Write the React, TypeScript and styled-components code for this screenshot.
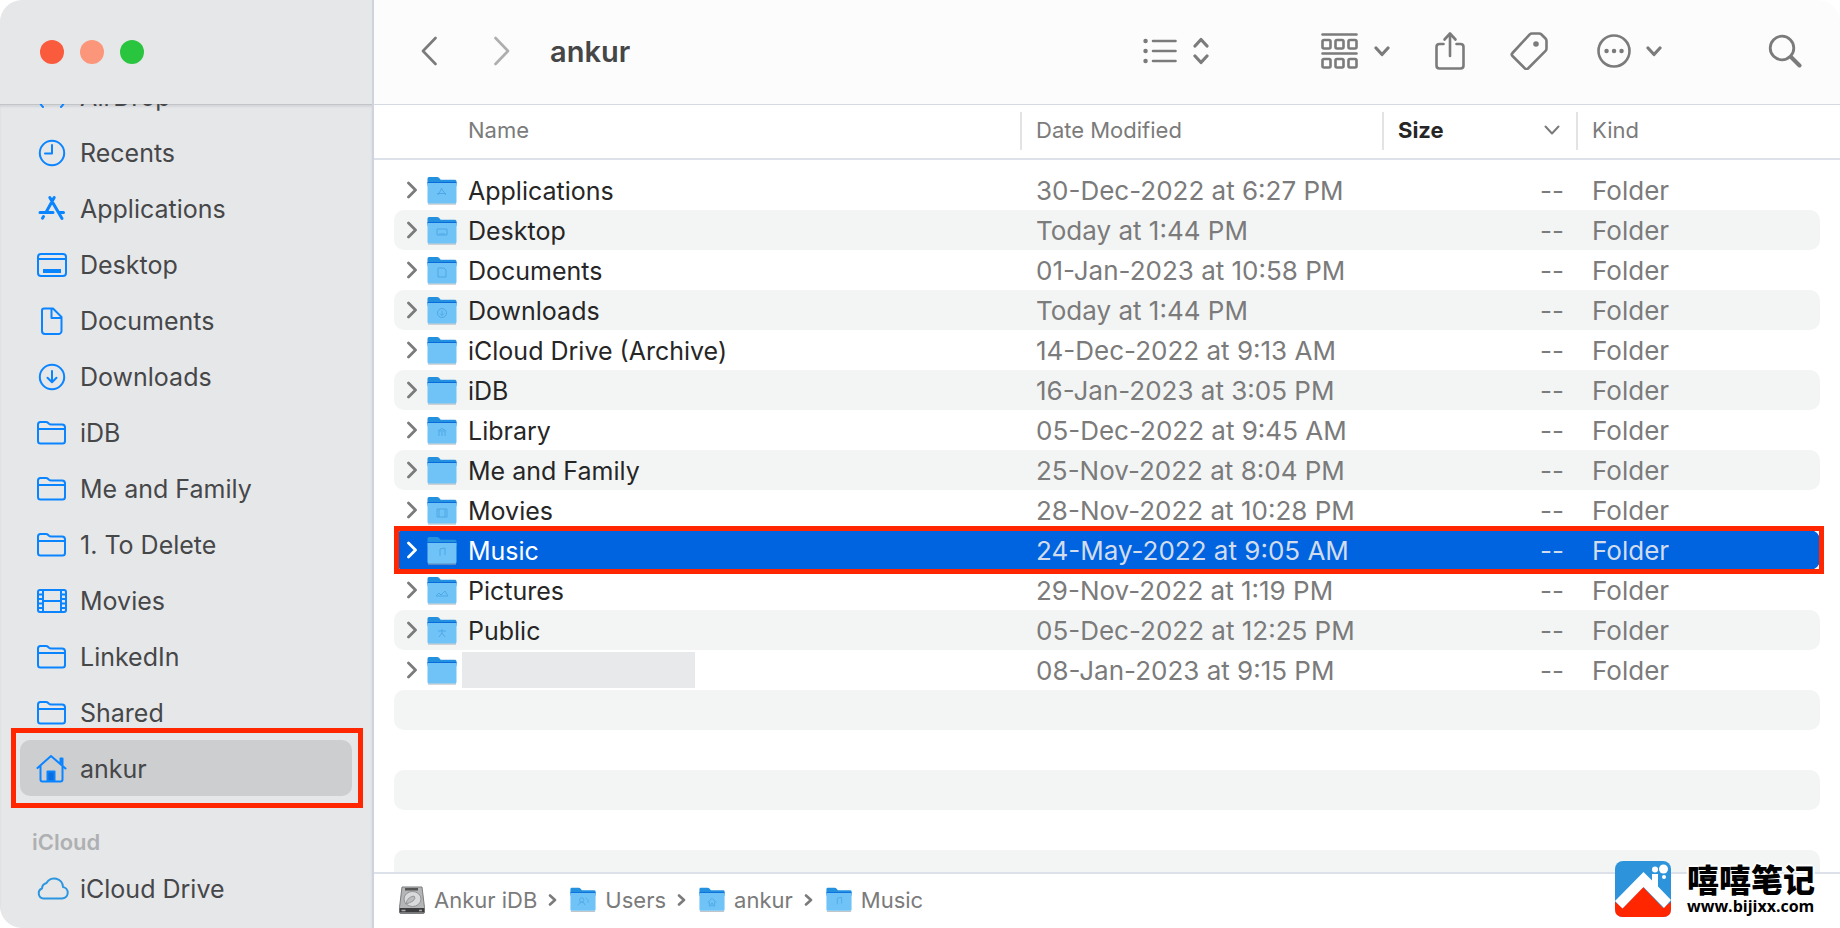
import React from "react";
import styled, { createGlobalStyle, css } from "styled-components";

const GlobalStyle = createGlobalStyle`
  * { box-sizing: border-box; }
  html, body { margin: 0; background: #fff; }
  body { font-family: Inter, "Liberation Sans", sans-serif; color: #262626; }
  button { font: inherit; color: inherit; background: none; border: 0; padding: 0; cursor: pointer; display: flex; align-items: center; }
  ul, ol { list-style: none; margin: 0; padding: 0; }
  a { color: inherit; text-decoration: none; }
  svg { display: block; flex: none; }
`;

const Window = styled.div`
  position: relative;
  display: flex;
  height: 100vh;
  min-height: 480px;
  overflow: hidden;
  border-radius: 22px;
  background: #fff;
`;

const Sidebar = styled.aside`
  display: flex;
  flex-direction: column;
  flex: none;
  width: 374px;
  background: #e6e7e9;
  border-right: 2px solid #ced3dc;
`;

const TitleBar = styled.div`
  flex: none;
  display: flex;
  align-items: center;
  gap: 16px;
  height: 104px;
  padding-left: 40px;
`;

const Light = styled.button<{ $color: string }>`
  width: 24px;
  height: 24px;
  border-radius: 50%;
  background: ${(p) => p.$color};
`;

const SideScroll = styled.nav`
  flex: 1;
  min-height: 0;
  overflow: hidden;
  display: flex;
  flex-direction: column;
  box-shadow: inset 0 1px 0 #c3c4c6, inset 0 3px 2px #d3d6db;
`;

const Places = styled.ul<{ $scrolled?: boolean }>`
  margin: ${(p) => (p.$scrolled ? "-36px" : "0")} 20px 0;
`;

const Place = styled.li`
  position: relative;
`;

const PlaceLink = styled.a<{ $active?: boolean }>`
  display: flex;
  align-items: center;
  gap: 11px;
  height: 56px;
  padding: 2px 0 0 15px;
  border-radius: 10px;
  font-size: 25px;
  color: #464749;
  background: ${(p) => (p.$active ? "#cdced0" : "transparent")};
  svg { width: 34px; }
`;

const marker = css`
  content: "";
  position: absolute;
  border: 5px solid #ff2600;
  pointer-events: none;
`;

const MarkedPlace = styled(Place)`
  &::after { ${marker} inset: -12px -11px -12px -9px; }
`;

const SectionTitle = styled.h2`
  margin: 32px 32px 4px;
  font-size: 22px;
  line-height: 28px;
  font-weight: 600;
  color: #afb0b2;
`;

const Main = styled.main`
  flex: 1;
  min-width: 0;
  display: flex;
  flex-direction: column;
`;

const Toolbar = styled.header`
  flex: none;
  display: flex;
  align-items: center;
  height: 105px;
  padding: 0 38px 2px 47px;
  background: #fcfcfc;
  border-bottom: 1px solid #d4d9e2;
  color: #7b7b7b;
`;

const Title = styled.h1`
  flex: 1;
  margin: 0 0 0 40px;
  font-size: 29px;
  font-weight: 600;
  color: #454648;
`;

const NavButton = styled.button<{ $dim?: boolean }>`
  opacity: ${(p) => (p.$dim ? 0.6 : 1)};
  & + & { margin-left: 57px; }
`;

const Tool = styled.button<{ $before?: number; $tight?: boolean }>`
  gap: ${(p) => (p.$tight ? 14 : 16)}px;
  margin-left: ${(p) => p.$before ?? 44}px;
`;

const Listing = styled.table`
  flex: 1;
  min-height: 0;
  display: flex;
  flex-direction: column;
  overflow: hidden;
`;

const columns = css`
  display: grid;
  grid-template-columns: minmax(0, 1fr) 362px 194px 244px;
`;

const Head = styled.thead`
  flex: none;
  display: block;
  padding: 7px 20px 8px;
  border-bottom: 2px solid #dde1e9;
`;

const HeadRow = styled.tr`
  ${columns}
`;

const HeadCell = styled.th<{ $sorted?: boolean; $first?: boolean }>`
  display: flex;
  align-items: center;
  justify-content: space-between;
  height: 38px;
  padding: 0 16px 2px ${(p) => (p.$first ? "74px" : "14px")};
  border-left: ${(p) => (p.$first ? "0" : "2px solid #e3e3e5")};
  font-size: 22px;
  font-weight: ${(p) => (p.$sorted ? 700 : 400)};
  color: ${(p) => (p.$sorted ? "#262626" : "#7b7b7b")};
`;

const Body = styled.tbody`
  flex: 1;
  min-height: 0;
  display: block;
  overflow: hidden;
  padding: 10px 20px 0;
`;

const Row = styled.tr<{ $selected?: boolean }>`
  ${columns}
  position: relative;
  height: 40px;
  border-radius: 10px;
  color: #7b7b7b;
  &:nth-child(even) { background: #f3f5f5; }
  ${(p) =>
    p.$selected &&
    css`
      &&:nth-child(even) { background: #0064e1; }
      color: #d2dcec;
      z-index: 1;
      &::after { ${marker} inset: -4px -4px -4px 0; }
    `}
`;

const Cell = styled.td<{ $end?: boolean }>`
  padding: 2px ${(p) => (p.$end ? "12px" : "0")} 0 16px;
  font-size: 26px;
  line-height: 38px;
  white-space: nowrap;
  text-align: ${(p) => (p.$end ? "right" : "left")};
`;

const NameCell = styled(Cell)<{ $selected?: boolean }>`
  display: flex;
  align-items: center;
  padding-left: 13px;
  font-size: 25px;
  color: ${(p) => (p.$selected ? "#fff" : "#262626")};
`;

const Disclosure = styled.button<{ $selected?: boolean }>`
  margin: 0 10px 2px 0;
  color: ${(p) => (p.$selected ? "#fff" : "#7b7b7b")};
`;

const FileName = styled.span`
  margin-left: 11px;
`;

const Redacted = styled.span`
  width: 233px;
  height: 36px;
  margin: 0 0 2px 5px;
  background: #e8e9ea;
`;

const PathBar = styled.footer`
  flex: none;
  height: 56px;
  padding: 0 25px;
  border-top: 2px solid #dde1e9;
  color: #7b7b7b;
`;

const Crumbs = styled.ol`
  display: flex;
  align-items: center;
  height: 52px;
  gap: 11px;
`;

const Crumb = styled.li`
  display: flex;
  align-items: center;
  gap: 13px;
  font-size: 22px;
  line-height: 28px;
  a { display: flex; align-items: center; gap: 9px; }
`;

const Brand = styled.a`
  position: absolute;
  right: 25px;
  bottom: 11px;
  display: flex;
  align-items: center;
  gap: 16px;
  color: #000;
  text-shadow: 0 0 2px #fff, 2px 0 1px #fff, -2px 0 1px #fff, 0 2px 1px #fff, 0 -2px 1px #fff;
`;

const BrandText = styled.span`
  display: flex;
  flex-direction: column;
`;

const BrandName = styled.span`
  font: 900 32px/34px "Noto Sans CJK SC", sans-serif;
`;

const BrandUrl = styled.span`
  font: 700 16px/22px "Open Sans", sans-serif;
`;

/* Icons */

const sideStroke = { fill: "none", stroke: "#0a84ff", strokeWidth: 2, strokeLinecap: "round", strokeLinejoin: "round" } as const;
const toolStroke = { fill: "none", stroke: "currentColor", strokeWidth: 2.6, strokeLinecap: "round", strokeLinejoin: "round" } as const;

const sideGlyphs = {
  airdrop: <path d="M8 27A13 13 0 1 1 26 27M11 23A8 8 0 1 1 23 23M17 18v1" />,
  clock: <><circle cx="17" cy="17" r="12.2" /><path d="M17 9v8.5H10" /></>,
  apps: <g strokeWidth="3"><path d="M19.200 5.500L11.500 19.500M14.800 5.500L27 26.500M5 20.500h13M24.500 20.500h4M8.500 24.500L7.500 26.200" /></g>,
  desktop: <><rect x="3" y="6" width="28" height="22" rx="3" /><path d="M3 11h28" /><path d="M8 23h18" strokeWidth="4" strokeLinecap="butt" /></>,
  doc: <path d="M9 4.500h9l8.500 8.500v14a3 3 0 0 1-3 3H10a3 3 0 0 1-3-3V6.500a2 2 0 0 1 2-2zM16.500 5v9h9.500" />,
  down: <><circle cx="17" cy="17" r="12.200" /><path d="M17 11v11M12.500 17.800l4.500 4.500 4.500-4.500" /></>,
  folder: <path d="M3 25V8.500Q3 6 5.500 6h5.500q1.200 0 2.200 1l.8.800q.8.700 2 .700H27q3 0 3 3V25q0 2.500-2.500 2.500h-22Q3 27.500 3 25zM3 13h27" />,
  film: <><rect x="3" y="6" width="28" height="22" rx="2" /><path d="M8 6v22M26 6v22M8 17h18M3 10.500h5M3 15h5M3 19.500h5M3 24h5M26 10.500h5M26 15h5M26 19.500h5M26 24h5" /></>,
  home: <><path d="M2.500 16L16 4l14.500 12.500M25.500 11V6.500h2V13M5.500 14v13.500q0 2 2 2h18q2 0 2-2V14.500" /><path d="M12.500 19.500h7v9.500h-7z" fill="#0a6ee0" /></>,
  cloud: <path d="M8.500 26.500h18.500a5.800 5.800 0 0 0 1-11.500A8.800 8.800 0 0 0 11.500 11a6 6 0 0 0-4.500 5.500 5.200 5.200 0 0 0 1.500 10z" stroke="#2d96e0" />,
};

const SideIcon = ({ name }: { name: keyof typeof sideGlyphs }) => (
  <svg viewBox="0 0 34 34" height="34" {...sideStroke} aria-hidden="true">{sideGlyphs[name]}</svg>
);

const emblems: Record<string, React.ReactNode> = {
  Applications: <path d="M15 10l-4 7M14 10l5 7M10 15.500h9" />,
  Desktop: <path d="M10 11h10v6H10zM12 16h6" />,
  Documents: <path d="M11 10h6l2 2v7h-8z" />,
  Downloads: <><circle cx="15" cy="15" r="4.500" /><path d="M15 12.500v5M13 15.500l2 2 2-2" /></>,
  Library: <path d="M11 13l4-2.500 4 2.500zM12 14v4M15 14v4M18 14v4" />,
  Movies: <path d="M10 11h10v8H10zM12 11v8M18 11v8" />,
  Music: <path d="M13 18v-7l5-1v7" />,
  Pictures: <path d="M9 18l3-3 2 2 4-4 3 5z" />,
  Public: <path d="M15 11v4l-3 4M15 15l3 4M11 13h8" />,
  Users: <><circle cx="13.500" cy="13" r="2.500" /><path d="M9.500 19q1-3.500 4-3.500t4 3.500M18 11q3 0 3 5" /></>,
  ankur: <path d="M10 16l5-5 5 5M12 15v5h2v-3h2v3h2v-5" />,
};

const FolderIcon = ({ emblem, size = 30 }: { emblem?: string; size?: number }) => (
  <svg width={size} height={size} viewBox="0 0 30 30" aria-hidden="true">
    <path d="M1 27.500h28v1H1z" fill="#a9adb2" />
    <path d="M.5 2.500q0-1.500 1.500-1.500h8q1.200 0 2 .8l1.200 1.400q.5.600 1.500.600H28q1.500 0 1.500 1.500V10H.5z" fill="#2490e0" />
    <path d="M.5 6h29v1.500H.5z" fill="#0a6bdc" />
    <path d="M.5 7h29v19q0 1.500-1.500 1.500H2Q.5 27.500.5 26z" fill="#70c3f6" />
    {emblem && emblems[emblem] && <g transform="translate(0 2)" fill="none" stroke="#4fa9e6" strokeWidth="1">{emblems[emblem]}</g>}
  </svg>
);

const DriveIcon = () => (
  <svg width="26" height="30" viewBox="0 0 26 30" aria-hidden="true">
    <path d="M3 2h20l2.500 20.500V27q0 1.500-1.500 1.500H2Q.5 28.500.5 27v-4.500z" fill="#b4b5b7" stroke="#7b7c7e" strokeWidth="1" />
    <path d="M6 3h13v2.500H6z" fill="#555" />
    <ellipse cx="13.500" cy="14" rx="8.500" ry="7.500" fill="#d9dadc" stroke="#929395" />
    <path d="M7 19q1-7 8-8 2.500 2-1 5-3 2-7 3z" fill="#bbbcbe" stroke="#8a8b8d" strokeWidth=".8" />
    <path d="M.8 23h24.400v4.500H.8z" fill="#3c3c3e" />
    <path d="M2.500 25.500h4M20 25.500h3" stroke="#aaa" strokeWidth="1.500" />
  </svg>
);

const Down = () => (
  <svg width="16" height="12" viewBox="0 0 16 12" {...toolStroke} strokeWidth="3.200" aria-hidden="true"><path d="M2 3l6 6.500L14 3" /></svg>
);

const BrandMark = () => (
  <svg width="56" height="56" viewBox="0 0 56 56" aria-hidden="true">
    <rect width="56" height="56" rx="8" fill="#2d94dc" />
    <path d="M0 41l8 6 20-21 20 21 8-6v7q0 8-8 8H8q-8 0-8-8z" fill="#ff2600" />
    <path d="M0 40L28.500 11l8.500 8.500V13h6v12.500L56 39l-7 8-20.500-21L7.500 47.500z" fill="#fff" />
    <circle cx="40" cy="8.500" r="3" fill="#fff" />
    <circle cx="48.500" cy="8" r="4.500" fill="#fff" />
    <circle cx="49" cy="16" r="2" fill="#fff" />
  </svg>
);

/* Data */

const places: { label: string; icon: keyof typeof sideGlyphs }[] = [
  { label: "AirDrop", icon: "airdrop" },
  { label: "Recents", icon: "clock" },
  { label: "Applications", icon: "apps" },
  { label: "Desktop", icon: "desktop" },
  { label: "Documents", icon: "doc" },
  { label: "Downloads", icon: "down" },
  { label: "iDB", icon: "folder" },
  { label: "Me and Family", icon: "folder" },
  { label: "1. To Delete", icon: "folder" },
  { label: "Movies", icon: "film" },
  { label: "LinkedIn", icon: "folder" },
  { label: "Shared", icon: "folder" },
];

const files: [string, string][] = [
  ["Applications", "30-Dec-2022 at 6:27 PM"],
  ["Desktop", "Today at 1:44 PM"],
  ["Documents", "01-Jan-2023 at 10:58 PM"],
  ["Downloads", "Today at 1:44 PM"],
  ["iCloud Drive (Archive)", "14-Dec-2022 at 9:13 AM"],
  ["iDB", "16-Jan-2023 at 3:05 PM"],
  ["Library", "05-Dec-2022 at 9:45 AM"],
  ["Me and Family", "25-Nov-2022 at 8:04 PM"],
  ["Movies", "28-Nov-2022 at 10:28 PM"],
  ["Music", "24-May-2022 at 9:05 AM"],
  ["Pictures", "29-Nov-2022 at 1:19 PM"],
  ["Public", "05-Dec-2022 at 12:25 PM"],
  ["", "08-Jan-2023 at 9:15 PM"],
];

const path = ["Users", "ankur", "Music"];

export default function App() {
  return (
    <>
      <GlobalStyle />
      <Window>
        <Sidebar>
          <TitleBar>
            <Light $color="#fa5b3c" aria-label="Close" />
            <Light $color="#fc967a" aria-label="Minimize" />
            <Light $color="#2ac53f" aria-label="Zoom" />
          </TitleBar>
          <SideScroll>
            <Places $scrolled>
              {places.map((p) => (
                <Place key={p.label}>
                  <PlaceLink href="#"><SideIcon name={p.icon} />{p.label}</PlaceLink>
                </Place>
              ))}
              <MarkedPlace>
                <PlaceLink href="#" $active><SideIcon name="home" />ankur</PlaceLink>
              </MarkedPlace>
            </Places>
            <SectionTitle>iCloud</SectionTitle>
            <Places>
              <Place>
                <PlaceLink href="#"><SideIcon name="cloud" />iCloud Drive</PlaceLink>
              </Place>
            </Places>
          </SideScroll>
        </Sidebar>
        <Main>
          <Toolbar>
            <NavButton aria-label="Back">
              <svg width="16" height="30" viewBox="0 0 16 30" {...toolStroke}><path d="M14.500 2L2 15l12.500 13" /></svg>
            </NavButton>
            <NavButton $dim aria-label="Forward">
              <svg width="16" height="30" viewBox="0 0 16 30" {...toolStroke}><path d="M1.500 2L14 15 1.500 28" /></svg>
            </NavButton>
            <Title>ankur</Title>
            <Tool aria-label="View as list">
              <svg width="34" height="26" viewBox="0 0 34 26" {...toolStroke}>
                <path d="M10 3h22.500M10 13h22.500M10 23h22.500" />
                <path d="M2.500 3h.1M2.500 13h.1M2.500 23h.1" strokeWidth="4.400" />
              </svg>
              <svg width="16" height="28" viewBox="0 0 16 28" {...toolStroke} strokeWidth="3.200"><path d="M2 9l6-6.500L14 9M2 19l6 6.500 6-6.500" /></svg>
            </Tool>
            <Tool $before={112} aria-label="Group">
              <svg width="37" height="38" viewBox="0 0 37 38" {...toolStroke}>
                <path d="M1.500 2.500h34M1.500 21.500h34" />
                {[8, 27].map((y) => [1.5, 14.5, 27.5].map((x) => <rect key={`${x}-${y}`} x={x} y={y} width="8" height="8.500" rx="1.500" />))}
              </svg>
              <Down />
            </Tool>
            <Tool aria-label="Share">
              <svg width="32" height="40" viewBox="0 0 32 40" {...toolStroke}>
                <path d="M9.500 13H5.500q-3 0-3 3v18.500q0 3 3 3h21q3 0 3-3V16q0-3-3-3h-4M16 25V3M10.500 8.500L16 2.500l5.500 6" />
              </svg>
            </Tool>
            <Tool aria-label="Tags">
              <svg width="38" height="38" viewBox="0 0 38 38" {...toolStroke}>
                <path d="M19.500 2.600Q20.600 1.500 22 1.500h7q1.500 0 2.500 1l4 4q1 1 1 2.500v7.500q0 1.500-1.200 2.700L18 36.500q-1.500 1.300-3 0L2.500 24q-1.500-1.500 0-3z" />
                <circle cx="26" cy="12" r="1.500" fill="currentColor" />
              </svg>
            </Tool>
            <Tool $before={48} $tight aria-label="More">
              <svg width="36" height="36" viewBox="0 0 36 36" {...toolStroke}>
                <circle cx="18" cy="18" r="15.500" />
                <path d="M10.500 18h.1M18 18h.1M25.500 18h.1" strokeWidth="4.400" />
              </svg>
              <Down />
            </Tool>
            <Tool $before={106} aria-label="Search">
              <svg width="34" height="34" viewBox="0 0 34 34" {...toolStroke} strokeWidth="2.800">
                <circle cx="14" cy="14" r="11.800" /><path d="M23 23l8.500 8.500" strokeWidth="4" />
              </svg>
            </Tool>
          </Toolbar>
          <Listing>
            <Head>
              <HeadRow>
                <HeadCell $first scope="col">Name</HeadCell>
                <HeadCell scope="col">Date Modified</HeadCell>
                <HeadCell $sorted scope="col">
                  Size
                  <svg width="16" height="10" viewBox="0 0 16 10" fill="none" stroke="#7b7b7b" strokeWidth="2" strokeLinecap="round" strokeLinejoin="round"><path d="M1.500 1.500L8 8.500l6.500-7" /></svg>
                </HeadCell>
                <HeadCell scope="col">Kind</HeadCell>
              </HeadRow>
            </Head>
            <Body>
              {files.map(([name, date]) => {
                const selected = name === "Music";
                return (
                  <Row key={date + name} $selected={selected}>
                    <NameCell $selected={selected}>
                      <Disclosure $selected={selected} aria-label="Expand">
                        <svg width="10" height="18" viewBox="0 0 10 18" {...toolStroke} strokeWidth="2.800"><path d="M1.500 2L8.500 9l-7 7" /></svg>
                      </Disclosure>
                      <FolderIcon emblem={name} />
                      {name ? <FileName>{name}</FileName> : <Redacted />}
                    </NameCell>
                    <Cell>{date}</Cell>
                    <Cell $end>--</Cell>
                    <Cell>Folder</Cell>
                  </Row>
                );
              })}
              {[0, 1, 2, 3, 4].map((n) => (
                <Row key={n} aria-hidden="true"><Cell /></Row>
              ))}
            </Body>
          </Listing>
          <PathBar>
            <Crumbs>
              <Crumb><a href="#"><DriveIcon />Ankur iDB</a></Crumb>
              {path.map((p) => (
                <Crumb key={p}>
                  <svg width="9" height="12" viewBox="0 0 9 12" {...toolStroke}><path d="M2 1.500L7 6l-5 4.500" /></svg>
                  <a href="#"><FolderIcon emblem={p} size={26} />{p}</a>
                </Crumb>
              ))}
            </Crumbs>
          </PathBar>
        </Main>
        <Brand href="#">
          <BrandMark />
          <BrandText>
            <BrandName lang="zh-CN">嘻嘻笔记</BrandName>
            <BrandUrl>www.bijixx.com</BrandUrl>
          </BrandText>
        </Brand>
      </Window>
    </>
  );
}
